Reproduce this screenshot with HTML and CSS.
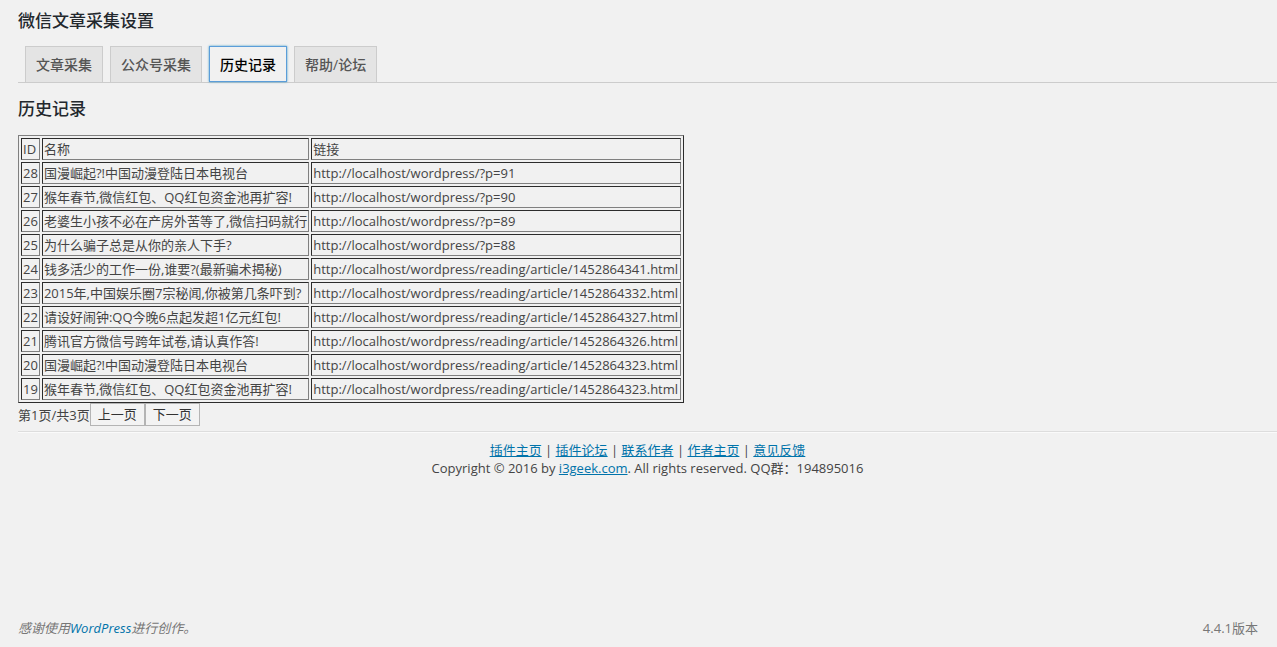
FILE: index.html
```html
<!DOCTYPE html>
<html lang="zh-CN">
<head>
<meta charset="utf-8">
<title>微信文章采集设置</title>
<link rel="stylesheet" href="styles.css">
</head>
<body>
<div class="page">
  <div class="wrap">
    <h2 class="title">微信文章采集设置</h2>
    <nav class="tabs">
      <a class="tab" href="#">文章采集</a>
      <a class="tab" href="#">公众号采集</a>
      <a class="tab tab-active" href="#">历史记录</a>
      <a class="tab" href="#">帮助/论坛</a>
    </nav>
    <h2 class="section">历史记录</h2>
    <table class="history">
      <tr><td>ID</td><td>名称</td><td>链接</td></tr>
      <tr><td>28</td><td>国漫崛起?!中国动漫登陆日本电视台</td><td>http://localhost/wordpress/?p=91</td></tr>
      <tr><td>27</td><td>猴年春节,微信红包、QQ红包资金池再扩容!</td><td>http://localhost/wordpress/?p=90</td></tr>
      <tr><td>26</td><td>老婆生小孩不必在产房外苦等了,微信扫码就行</td><td>http://localhost/wordpress/?p=89</td></tr>
      <tr><td>25</td><td>为什么骗子总是从你的亲人下手?</td><td>http://localhost/wordpress/?p=88</td></tr>
      <tr><td>24</td><td>钱多活少的工作一份,谁要?(最新骗术揭秘)</td><td>http://localhost/wordpress/reading/article/1452864341.html</td></tr>
      <tr><td>23</td><td>2015年,中国娱乐圈7宗秘闻,你被第几条吓到?</td><td>http://localhost/wordpress/reading/article/1452864332.html</td></tr>
      <tr><td>22</td><td>请设好闹钟:QQ今晚6点起发超1亿元红包!</td><td>http://localhost/wordpress/reading/article/1452864327.html</td></tr>
      <tr><td>21</td><td>腾讯官方微信号跨年试卷,请认真作答!</td><td>http://localhost/wordpress/reading/article/1452864326.html</td></tr>
      <tr><td>20</td><td>国漫崛起?!中国动漫登陆日本电视台</td><td>http://localhost/wordpress/reading/article/1452864323.html</td></tr>
      <tr><td>19</td><td>猴年春节,微信红包、QQ红包资金池再扩容!</td><td>http://localhost/wordpress/reading/article/1452864323.html</td></tr>
    </table>
    <div class="pager">
      <span>第1页/共3页</span><button class="pbtn">上一页</button><button class="pbtn">下一页</button>
    </div>
    <hr class="sep">
    <div class="credits">
      <p><a href="#">插件主页</a> | <a href="#">插件论坛</a> | <a href="#">联系作者</a> | <a href="#">作者主页</a> | <a href="#">意见反馈</a></p>
      <p>Copyright © 2016 by <a href="#">i3geek.com</a>. All rights reserved. QQ群：194895016</p>
    </div>
  </div>
  <footer class="footer">
    <p class="thanks">感谢使用<a class="wplink" href="#">WordPress</a>进行创作。</p>
    <p class="version">4.4.1版本</p>
  </footer>
</div>
</body>
</html>
```
FILE: styles.css
```css
html, body {
  margin: 0;
  padding: 0;
  background: #f1f1f1;
}
body {
  font-family: "Open Sans", "Noto Sans CJK SC", sans-serif;
  font-size: 13px;
  line-height: 18px;
  color: #444;
}
a {
  color: #0073aa;
}
.page {
  min-height: 647px;
  display: flex;
  flex-direction: column;
}
.wrap {
  padding: 9px 0 0 18px;
}
.title, .section {
  margin: 0;
  font-size: 17px;
  line-height: 24px;
  font-weight: 500;
  color: #23282d;
}
.tabs {
  display: flex;
  margin-top: 13px;
  border-bottom: 1px solid #ccc;
}
.tab {
  margin-left: 7px;
  padding: 5px 10px;
  border: 1px solid #ccc;
  border-bottom: none;
  background: #e4e4e4;
  color: #555;
  font-size: 14px;
  line-height: 25px;
  font-weight: 500;
  text-decoration: none;
  white-space: nowrap;
}
.tab-active {
  background: #f1f1f1;
  color: #000;
  border: 1px solid #5b9dd9;
  box-shadow: 0 0 2px rgba(30, 140, 190, 0.8);
  padding-bottom: 4px;
}
.section {
  margin-top: 14px;
}
.history {
  margin-top: 14px;
  border: 1px outset #808080;
  border-spacing: 2px;
}
.history td {
  border: 1px inset #808080;
  padding: 1px;
  line-height: 18px;
  white-space: nowrap;
  color: #444;
}
.history td:last-child {
  padding-right: 2px;
}
.pager {
  display: flex;
  align-items: center;
}
.pbtn {
  font-family: "Open Sans", "Noto Sans CJK SC", sans-serif;
  font-size: 13px;
  line-height: 17px;
  padding: 2px 7px;
  margin: 0;
  border: 1px solid #b4b4b4;
  background: #f3f3f3;
  color: #333;
}
.sep {
  margin: 5px 0 0 0;
  border: 0;
  border-top: 1px solid #ddd;
  border-bottom: 1px solid #fafafa;
}
.credits {
  text-align: center;
  padding-top: 8px;
  color: #444;
}
.credits p {
  margin: 0;
}
.footer {
  margin-top: auto;
  display: flex;
  justify-content: space-between;
  padding: 10px 19px 9px 18px;
  color: #777;
}
.footer p {
  margin: 0;
  line-height: 20px;
}
.thanks {
  font-style: italic;
}
.wplink {
  text-decoration: none;
}
```
